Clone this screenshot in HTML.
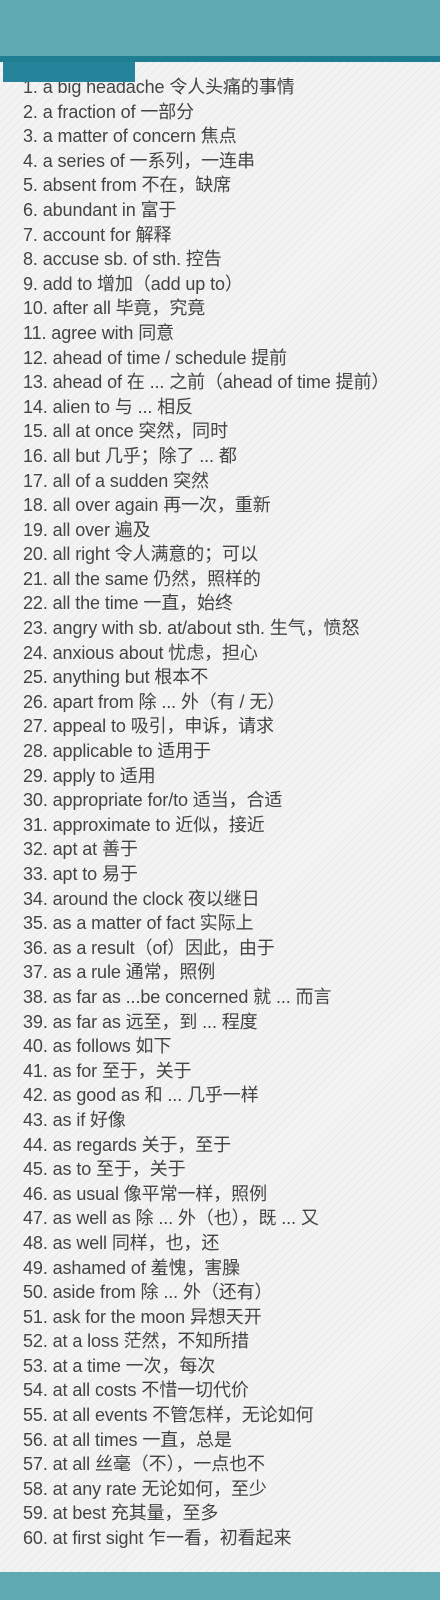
<!DOCTYPE html>
<html><head><meta charset="utf-8"><style>
body{margin:0;width:440px;height:1600px;position:relative;overflow:hidden;background:#f3f3f3;
background-image:repeating-linear-gradient(-45deg,rgba(0,0,0,0) 0 5px,rgba(0,0,0,0.035) 5px 6px);
font-family:"Liberation Sans","Noto Sans CJK SC",sans-serif;}
.top{position:absolute;left:0;top:0;width:440px;height:56px;background:#5fa9b2}
.band{position:absolute;left:0;top:56px;width:440px;height:6px;background:#1f7f91}
.blk{position:absolute;left:3px;top:62px;width:132px;height:20px;background:#25849a}
.bot{position:absolute;left:0;top:1572px;width:440px;height:28px;background:#5fa9b2}
ol{list-style:none;margin:0;padding:0;position:absolute;left:23px;top:75px}
li{height:24.6px;line-height:24.6px;font-size:18px;color:#444;white-space:nowrap;letter-spacing:-0.1px}
</style></head><body>
<div class="top"></div><div class="band"></div>
<ol>
<li>1. a big headache 令人头痛的事情</li>
<li>2. a fraction of 一部分</li>
<li>3. a matter of concern 焦点</li>
<li>4. a series of 一系列，一连串</li>
<li>5. absent from 不在，缺席</li>
<li>6. abundant in 富于</li>
<li>7. account for 解释</li>
<li>8. accuse sb. of sth. 控告</li>
<li>9. add to 增加（add up to）</li>
<li>10. after all 毕竟，究竟</li>
<li>11. agree with 同意</li>
<li>12. ahead of time / schedule 提前</li>
<li>13. ahead of 在 ... 之前（ahead of time 提前）</li>
<li>14. alien to 与 ... 相反</li>
<li>15. all at once 突然，同时</li>
<li>16. all but 几乎；除了 ... 都</li>
<li>17. all of a sudden 突然</li>
<li>18. all over again 再一次，重新</li>
<li>19. all over 遍及</li>
<li>20. all right 令人满意的；可以</li>
<li>21. all the same 仍然，照样的</li>
<li>22. all the time 一直，始终</li>
<li>23. angry with sb. at/about sth. 生气，愤怒</li>
<li>24. anxious about 忧虑，担心</li>
<li>25. anything but 根本不</li>
<li>26. apart from 除 ... 外（有 / 无）</li>
<li>27. appeal to 吸引，申诉，请求</li>
<li>28. applicable to 适用于</li>
<li>29. apply to 适用</li>
<li>30. appropriate for/to 适当，合适</li>
<li>31. approximate to 近似，接近</li>
<li>32. apt at 善于</li>
<li>33. apt to 易于</li>
<li>34. around the clock 夜以继日</li>
<li>35. as a matter of fact 实际上</li>
<li>36. as a result（of）因此，由于</li>
<li>37. as a rule 通常，照例</li>
<li>38. as far as ...be concerned 就 ... 而言</li>
<li>39. as far as 远至，到 ... 程度</li>
<li>40. as follows 如下</li>
<li>41. as for 至于，关于</li>
<li>42. as good as 和 ... 几乎一样</li>
<li>43. as if 好像</li>
<li>44. as regards 关于，至于</li>
<li>45. as to 至于，关于</li>
<li>46. as usual 像平常一样，照例</li>
<li>47. as well as 除 ... 外（也），既 ... 又</li>
<li>48. as well 同样，也，还</li>
<li>49. ashamed of 羞愧，害臊</li>
<li>50. aside from 除 ... 外（还有）</li>
<li>51. ask for the moon 异想天开</li>
<li>52. at a loss 茫然，不知所措</li>
<li>53. at a time 一次，每次</li>
<li>54. at all costs 不惜一切代价</li>
<li>55. at all events 不管怎样，无论如何</li>
<li>56. at all times 一直，总是</li>
<li>57. at all 丝毫（不），一点也不</li>
<li>58. at any rate 无论如何，至少</li>
<li>59. at best 充其量，至多</li>
<li>60. at first sight 乍一看，初看起来</li>
</ol>
<div class="blk"></div>
<div class="bot"></div>
</body></html>
